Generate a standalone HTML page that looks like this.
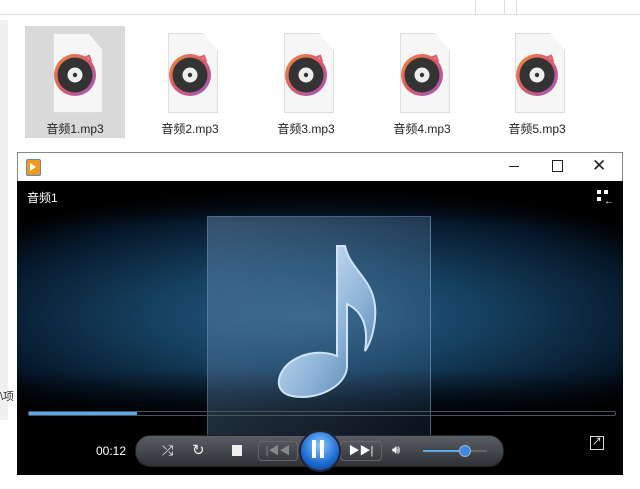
<!DOCTYPE html>
<html><head><meta charset="utf-8"><style>
body{margin:0;width:640px;height:489px;overflow:hidden;background:#fff;position:relative;font-family:"Liberation Sans","Noto Sans CJK SC",sans-serif;}
.a{position:absolute}
.file{position:absolute;top:30px;width:100px;height:108px;text-align:center;font-size:12px;color:#222}
.doc{position:absolute;left:28px;top:3px;width:48px;height:78px;background:#f6f6f6;border:1px solid #ddd;clip-path:polygon(0 0,70% 0,100% 22%,100% 100%,0 100%)}
</style></head><body>
<div class="a" style="left:0;top:0;width:640px;height:14px;border-bottom:1px solid #ddd;background:#fff"></div>
<div class="a" style="left:475px;top:0;width:28px;height:14px;border-left:1px solid #ddd;border-right:1px solid #ddd"></div>
<div class="a" style="left:516px;top:0;width:130px;height:14px;border:1px solid #ddd;border-top:none"></div>
<div class="a" style="left:0;top:20px;width:8px;height:400px;background:#f0f0f0"></div>
<div class="a" style="left:0;top:388px;font-size:11px;color:#333">\项</div>

<div class="file" style="left:25px;background:#d9d9d9;top:26px;height:112px"><div class="doc" style="top:7px"></div></div>
<div class="file" style="left:140px"><div class="doc"></div></div>
<div class="file" style="left:256px"><div class="doc"></div></div>
<div class="file" style="left:372px"><div class="doc"></div></div>
<div class="file" style="left:487px"><div class="doc"></div></div>
<svg class="a" style="left:0;top:0" width="640" height="140">
<defs><linearGradient id="rg2" x1="0" y1="0" x2="1" y2="1"><stop offset="0" stop-color="#f08a3a"/><stop offset=".5" stop-color="#d85a6a"/><stop offset="1" stop-color="#9a58c8"/></linearGradient>
<g id="disk"><circle cx="0" cy="0" r="21" fill="url(#rg2)"/><circle r="17.5" fill="#333"/><circle r="7.5" fill="#eee"/><circle r="2.2" fill="#333"/><path d="M9 -17 l5 -2 2 6" stroke="#e06070" stroke-width="2.5" fill="none"/></g></defs>
<use href="#disk" x="75" y="75"/><use href="#disk" x="190" y="75"/><use href="#disk" x="306" y="75"/><use href="#disk" x="422" y="75"/><use href="#disk" x="537" y="75"/>
</svg>
<div class="a" style="left:25px;top:120px;width:100px;text-align:center;font-size:12px;color:#222">音频1.mp3</div>
<div class="a" style="left:140px;top:120px;width:100px;text-align:center;font-size:12px;color:#222">音频2.mp3</div>
<div class="a" style="left:256px;top:120px;width:100px;text-align:center;font-size:12px;color:#222">音频3.mp3</div>
<div class="a" style="left:372px;top:120px;width:100px;text-align:center;font-size:12px;color:#222">音频4.mp3</div>
<div class="a" style="left:487px;top:120px;width:100px;text-align:center;font-size:12px;color:#222">音频5.mp3</div>

<div class="a" style="left:17px;top:152px;width:606px;height:30px;background:#fff;border:1px solid #888;border-bottom:none;box-sizing:border-box"></div>
<div class="a" style="left:26px;top:159px;width:13px;height:15px;background:#f39a1c;border:1px solid #5a8ac0;border-radius:2px"></div>
<div class="a" style="left:30px;top:163px;width:0;height:0;border-left:6px solid #fff;border-top:4px solid transparent;border-bottom:4px solid transparent"></div>
<div class="a" style="left:509px;top:166px;width:10px;height:1px;background:#222"></div>
<div class="a" style="left:552px;top:160px;width:9px;height:10px;border:1px solid #222"></div>
<div class="a" style="left:592px;top:156px;font-size:17px;color:#222">✕</div>

<div class="a" style="left:17px;top:181px;width:606px;height:294px;background:radial-gradient(ellipse 420px 130px at 300px 135px,#2a5f85 0%,#15405f 40%,#06182a 80%,#000 100%)"></div>
<div class="a" style="left:17px;top:181px;width:606px;height:45px;background:linear-gradient(#000,rgba(0,0,0,0))"></div>
<div class="a" style="left:17px;top:370px;width:606px;height:105px;background:linear-gradient(rgba(0,0,0,0),#000 45%)"></div>
<div class="a" style="left:27px;top:189px;color:#fff;font-size:12px">音频1</div>
<div class="a" style="left:597px;top:190px;width:4px;height:4px;background:#fff;box-shadow:7px 0 #fff,0 7px #fff"></div>
<div class="a" style="left:604px;top:197px;color:#fff;font-size:10px;line-height:10px">←</div>

<div class="a" style="left:207px;top:216px;width:224px;height:222px;border:1px solid rgba(140,170,200,.45);background:linear-gradient(135deg,rgba(110,150,190,.45),rgba(40,75,110,.25));box-sizing:border-box"></div>
<svg class="a" style="left:207px;top:216px" width="224" height="222">
<defs><linearGradient id="ng" x1="0" y1="0" x2="1" y2="1"><stop offset="0" stop-color="#e8f4ff"/><stop offset=".6" stop-color="#8fb4d8"/><stop offset="1" stop-color="#4a7aa8"/></linearGradient></defs>
<path d="M130 30 L138 30 C142 50 160 60 166 80 C172 100 165 125 158 135 C162 110 155 95 140 88 L140 150 C140 170 110 185 85 180 C65 176 70 155 85 145 C100 135 118 135 130 140 Z" fill="url(#ng)" stroke="#cfe4f7" stroke-width="2"/>
</svg>

<div class="a" style="left:28px;top:411px;width:586px;height:3px;border:1px solid #4a5560;border-radius:2px"></div>
<div class="a" style="left:29px;top:412px;width:108px;height:3px;background:#5aa8e8"></div>
<div class="a" style="left:96px;top:444px;color:#fff;font-size:12px">00:12</div>
<div class="a" style="left:135px;top:435px;width:367px;height:30px;border-radius:15px;background:linear-gradient(#5a5e64,#2e3236);border:1px solid #222"></div>
<div class="a" style="left:162px;top:442px;color:#eee;font-size:14px">⤮</div>
<div class="a" style="left:192px;top:441px;color:#eee;font-size:15px">↻</div>
<div class="a" style="left:232px;top:445px;width:10px;height:11px;background:#eee"></div>
<div class="a" style="left:258px;top:441px;width:38px;height:18px;border:1px solid #666;border-radius:4px;color:#888;font-size:11px;text-align:center;line-height:18px">|◀◀</div>
<div class="a" style="left:340px;top:441px;width:40px;height:18px;border:1px solid #666;border-radius:4px;color:#fff;font-size:11px;text-align:center;line-height:18px">▶▶|</div>
<div class="a" style="left:299px;top:430px;width:38px;height:38px;border-radius:50%;background:radial-gradient(circle at 50% 35%,#8ac8ff,#1a6ad0 60%,#0a3a8a);border:2px solid #223"></div>
<div class="a" style="left:312px;top:440px;width:4px;height:18px;background:#fff;box-shadow:8px 0 #fff"></div>
<div class="a" style="left:392px;top:442px;color:#fff;font-size:13px">🔊︎</div>
<div class="a" style="left:423px;top:450px;width:64px;height:2px;background:#666"></div>
<div class="a" style="left:423px;top:450px;width:40px;height:2px;background:#5aa8e8"></div>
<div class="a" style="left:459px;top:445px;width:10px;height:10px;border-radius:50%;background:#3a8ae0;border:1px solid #aad"></div>
<div class="a" style="left:590px;top:436px;width:12px;height:12px;border:1px solid #ddd;color:#fff;font-size:10px;line-height:12px;text-align:center">↗</div>
</body></html>
